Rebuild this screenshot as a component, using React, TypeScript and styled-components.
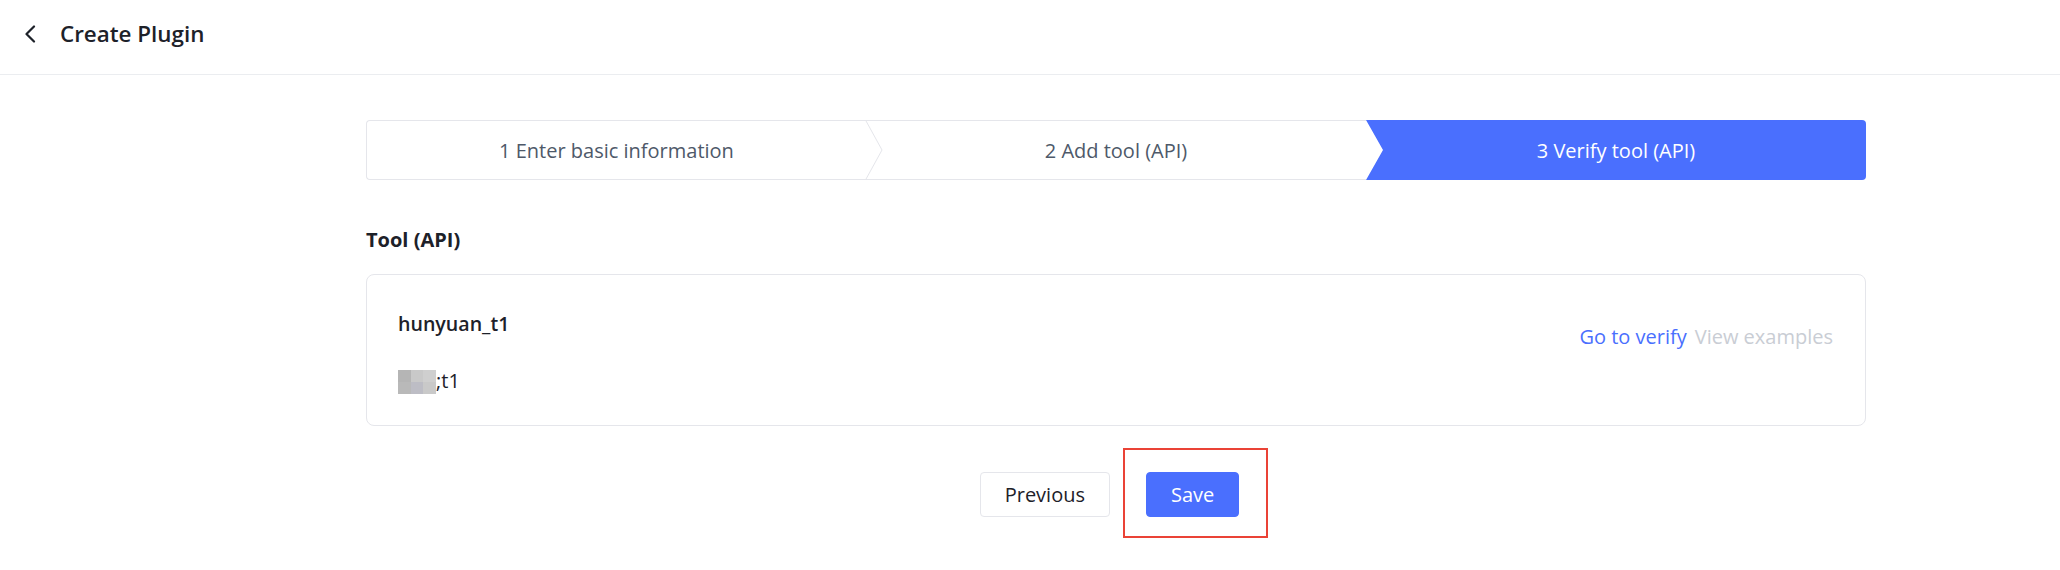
import React from "react";
import styled, { createGlobalStyle } from "styled-components";

const GlobalStyle = createGlobalStyle`
  html, body {
    margin: 0;
    padding: 0;
    background: #ffffff;
    font-family: "Open Sans", "Noto Sans", Arial, sans-serif;
    color: #1d2129;
  }
  * { box-sizing: border-box; }
`;

const Page = styled.div`
  width: 2060px;
  min-height: 570px;
  background: #fff;
`;

const Header = styled.header`
  height: 75px;
  display: flex;
  align-items: center;
  gap: 22px;
  padding: 0 0 6px 22px;
  border-bottom: 1px solid #ebedf0;
`;

const BackButton = styled.button`
  display: flex;
  align-items: center;
  justify-content: center;
  width: 16px;
  height: 20px;
  padding: 0;
  border: none;
  background: transparent;
  cursor: pointer;
`;

const Title = styled.h1`
  margin: 0;
  font-size: 22.4px;
  font-weight: 600;
  line-height: 30px;
  color: #1d2129;
`;

const Main = styled.main`
  width: 1500px;
  margin-left: 366px;
  padding-top: 45px;
`;

const Steps = styled.div`
  display: grid;
  grid-template-columns: repeat(3, 1fr);
  height: 60px;
`;

const Step = styled.div<{ $active?: boolean; $first?: boolean; $layer: number }>`
  position: relative;
  display: flex;
  align-items: center;
  justify-content: center;
  font-size: 20px;
  color: ${(p) => (p.$active ? "#ffffff" : "#4e5969")};
  background: ${(p) => (p.$active ? "#4a6ffe" : "#ffffff")};
  border-top: ${(p) => (p.$active ? "none" : "1px solid #e5e6eb")};
  border-bottom: ${(p) => (p.$active ? "none" : "1px solid #e5e6eb")};
  border-left: ${(p) => (p.$first ? "1px solid #e5e6eb" : "none")};
  border-radius: ${(p) => (p.$first ? "4px 0 0 4px" : p.$active ? "0 4px 4px 0" : "0")};
  clip-path: ${(p) =>
    p.$active ? "polygon(0 0, 100% 0, 100% 100%, 0 100%, 17px 50%)" : "none"};
  z-index: ${(p) => p.$layer};
`;

const Divider = styled.svg`
  position: absolute;
  top: -1px;
  right: -17px;
  width: 18px;
  height: 60px;
  overflow: visible;
`;

const SectionTitle = styled.h2`
  margin: 45px 0 19px;
  font-size: 20px;
  font-weight: 700;
  line-height: 30px;
  color: #1d2129;
`;

const Card = styled.div`
  display: flex;
  justify-content: space-between;
  align-items: flex-start;
  padding: 34px 32px 29px 31px;
  border: 1px solid #e5e6eb;
  border-radius: 8px;
`;

const ToolInfo = styled.div`
  display: flex;
  flex-direction: column;
  gap: 27px;
`;

const ToolName = styled.div`
  font-size: 19.6px;
  font-weight: 600;
  line-height: 30px;
  color: #1d2129;
`;

const ToolDesc = styled.div`
  display: flex;
  align-items: center;
  font-size: 20px;
  line-height: 30px;
  color: #1d2129;
`;

const Mosaic = styled.span`
  display: inline-grid;
  grid-template-columns: repeat(3, 12.7px);
  grid-template-rows: repeat(2, 12px);
  margin-top: 2px;
`;

const Tile = styled.span<{ $c: string }>`
  background: ${(p) => p.$c};
`;

const Actions = styled.div`
  display: flex;
  gap: 8px;
  margin-top: 13px;
  font-size: 20px;
  line-height: 30px;
`;

const LinkText = styled.a<{ $muted?: boolean }>`
  color: ${(p) => (p.$muted ? "#c9cdd4" : "#4a6ffe")};
  text-decoration: none;
  cursor: ${(p) => (p.$muted ? "not-allowed" : "pointer")};
`;

const Footer = styled.div`
  display: flex;
  justify-content: center;
  gap: 36px;
  margin-top: 46px;
  padding-right: 13px;
`;

const Button = styled.button<{ $primary?: boolean }>`
  height: 45px;
  padding: 0 24px;
  font-family: inherit;
  font-size: 20px;
  border-radius: 4px;
  border: 1px solid ${(p) => (p.$primary ? "#4a6ffe" : "#e5e6eb")};
  background: ${(p) => (p.$primary ? "#4a6ffe" : "#ffffff")};
  color: ${(p) => (p.$primary ? "#ffffff" : "#1d2129")};
  cursor: pointer;
`;

const Highlight = styled.span`
  position: relative;
  display: inline-flex;
`;

const HighlightBox = styled.span`
  position: absolute;
  left: -23px;
  top: -24px;
  right: -29px;
  bottom: -21px;
  border: 2px solid #ea4336;
  pointer-events: none;
`;

const mosaic = ["#b5b5b5", "#c9c9c9", "#cfcfcf", "#b9b9b9", "#bdbdc5", "#c9c9c9"];

const ChevronDivider = () => (
  <Divider viewBox="0 0 18 60">
    <polyline points="0.5,0 17,30 0.5,60" fill="none" stroke="#e5e6eb" strokeWidth="1" />
  </Divider>
);

export default function App() {
  return (
    <Page>
      <GlobalStyle />
      <Header>
        <BackButton aria-label="Back">
          <svg width="14" height="18" viewBox="0 0 14 18">
            <polyline
              points="11,1.5 3.5,9 11,16.5"
              fill="none"
              stroke="#1d2129"
              strokeWidth="2.2"
              strokeLinecap="round"
              strokeLinejoin="round"
            />
          </svg>
        </BackButton>
        <Title>Create Plugin</Title>
      </Header>
      <Main>
        <Steps>
          <Step $first $layer={3}>
            1 Enter basic information
            <ChevronDivider />
          </Step>
          <Step $layer={2}>2 Add tool (API)</Step>
          <Step $active $layer={1}>
            3 Verify tool (API)
          </Step>
        </Steps>
        <SectionTitle>Tool (API)</SectionTitle>
        <Card>
          <ToolInfo>
            <ToolName>hunyuan_t1</ToolName>
            <ToolDesc>
              <Mosaic>
                {mosaic.map((c, i) => (
                  <Tile key={i} $c={c} />
                ))}
              </Mosaic>
              ;t1
            </ToolDesc>
          </ToolInfo>
          <Actions>
            <LinkText>Go to verify</LinkText>
            <LinkText $muted>View examples</LinkText>
          </Actions>
        </Card>
        <Footer>
          <Button>Previous</Button>
          <Highlight>
            <Button $primary>Save</Button>
            <HighlightBox />
          </Highlight>
        </Footer>
      </Main>
    </Page>
  );
}
